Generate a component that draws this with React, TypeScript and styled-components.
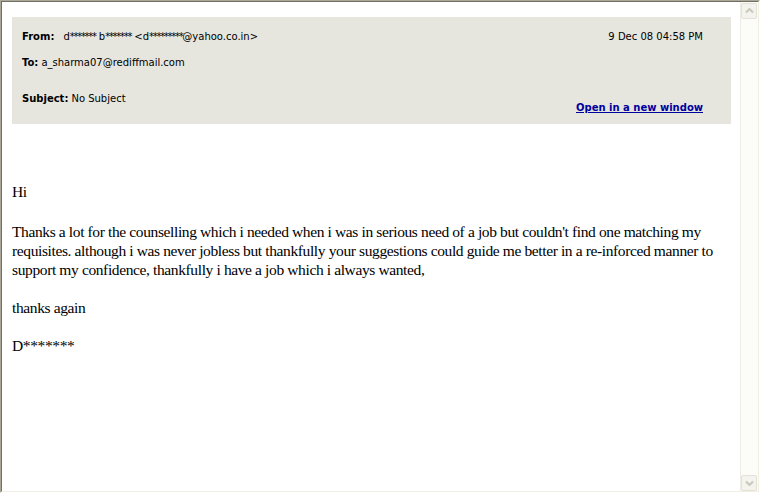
import React from "react";
import styled, { createGlobalStyle } from "styled-components";

const Global = createGlobalStyle`
  html, body { margin: 0; padding: 0; background: #ffffff; }
  body { width: 760px; height: 493px; overflow: hidden; }
`;

const Frame = styled.div`
  box-sizing: border-box;
  width: 760px;
  height: 493px;
  border-style: solid;
  border-width: 1px;
  border-color: #aca899 #ffffff #ffffff #aca899;
  display: flex;
`;

const Inner = styled.div`
  box-sizing: border-box;
  flex: 1;
  min-width: 0;
  display: flex;
  border-style: solid;
  border-width: 1px;
  border-color: #716f64 #f1efe2 #f1efe2 #716f64;
  background: #ffffff;
`;

const Content = styled.div`
  flex: 1;
  min-width: 0;
  padding: 15px 9px 0 10px;
  overflow: hidden;
`;

const Header = styled.div`
  background: #e6e6df;
  height: 107px;
  box-sizing: border-box;
  padding: 0 28px 0 10px;
  font-family: "DejaVu Sans", Verdana, sans-serif;
  font-size: 10px;
  color: #000000;
  display: grid;
  grid-template-columns: 1fr auto;
  grid-template-rows: 13px 14px 12px 14px 22px 14px 18px;
`;

const Line = styled.div<{ $row: number }>`
  grid-column: 1;
  grid-row: ${(p) => p.$row};
  line-height: 14px;
  white-space: nowrap;
`;

const Label = styled.b<{ $gap?: number }>`
  font-weight: bold;
  margin-right: ${(p) => p.$gap ?? 3}px;
`;

const Masked = styled.span`
  letter-spacing: -1.3px;
`;

const DateCell = styled.div`
  grid-column: 2;
  grid-row: 2;
  line-height: 14px;
  text-align: right;
  white-space: nowrap;
`;

const OpenLink = styled.a`
  grid-column: 2;
  grid-row: 6 / 8;
  align-self: start;
  margin-top: 9px;
  text-align: right;
  line-height: 14px;
  font-weight: bold;
  color: #0000a0;
  text-decoration: underline;
  white-space: nowrap;
  cursor: pointer;
`;

const Body = styled.div`
  padding-top: 58px;
  font-family: "Liberation Serif", "Times New Roman", serif;
  font-size: 15.5px;
  line-height: 19px;
  letter-spacing: -0.38px;
  color: #000000;
`;

const Para = styled.p<{ $after?: number }>`
  margin: 0 0 ${(p) => p.$after ?? 19}px 0;
  white-space: nowrap;
`;

const Scrollbar = styled.div`
  flex: none;
  width: 17px;
  background: #fcfcf9;
  border-left: 1px solid #eeede5;
  display: flex;
  flex-direction: column;
  justify-content: space-between;
  padding-top: 1px;
`;

const ScrollButton = styled.div`
  box-sizing: border-box;
  width: 16px;
  height: 16px;
  background: #f4f3ee;
  border: 1px solid #e3e1d8;
  border-radius: 2px;
  display: flex;
  align-items: center;
  justify-content: center;
`;

const Arrow = ({ down }: { down?: boolean }) => (
  <svg width="9" height="6" viewBox="0 0 9 6">
    <path
      d={down ? "M1 1.5 L4.5 5 L8 1.5" : "M1 4.5 L4.5 1 L8 4.5"}
      fill="none"
      stroke="#c9c7ba"
      strokeWidth="2"
    />
  </svg>
);

export default function App() {
  return (
    <>
      <Global />
      <Frame>
        <Inner>
          <Content>
            <Header>
              <Line $row={2}>
                <Label $gap={9}>From:</Label>d<Masked>*******</Masked> b<Masked>*******</Masked> &lt;d<Masked>*********</Masked>@yahoo.co.in&gt;
              </Line>
              <DateCell>9 Dec 08 04:58 PM</DateCell>
              <Line $row={4}>
                <Label>To:</Label>a_sharma07@rediffmail.com
              </Line>
              <Line $row={6}>
                <Label>Subject:</Label>No Subject
              </Line>
              <OpenLink>Open in a new window</OpenLink>
            </Header>
            <Body>
              <Para $after={21}>Hi</Para>
              <Para>
                Thanks a lot for the counselling which i needed when i was in serious need of a job but couldn't find one matching my
                <br />
                requisites. although i was never jobless but thankfully your suggestions could guide me better in a re-inforced manner to
                <br />
                support my confidence, thankfully i have a job which i always wanted,
              </Para>
              <Para>thanks again</Para>
              <Para>D*******</Para>
            </Body>
          </Content>
          <Scrollbar>
            <ScrollButton>
              <Arrow />
            </ScrollButton>
            <ScrollButton>
              <Arrow down />
            </ScrollButton>
          </Scrollbar>
        </Inner>
      </Frame>
    </>
  );
}
